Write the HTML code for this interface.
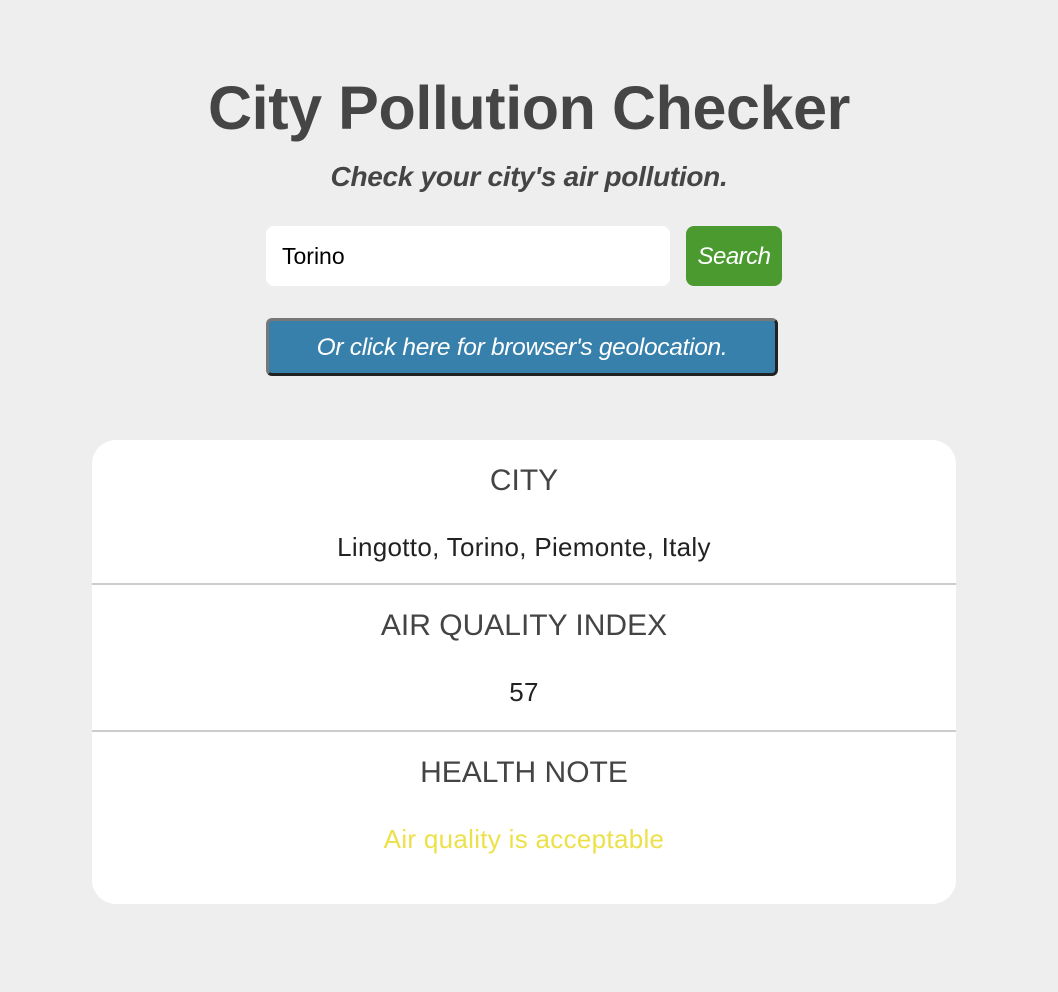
<!DOCTYPE html>
<html><head><style>
body{margin:0;background:#eee;font-family:"Liberation Sans",sans-serif;width:1058px;height:992px;position:relative;color:#444}
h1{position:absolute;top:73px;left:0;width:100%;text-align:center;margin:0;font-size:61px;font-weight:bold;color:#454545;letter-spacing:-0.4px}
.sub{position:absolute;top:161px;left:0;width:100%;text-align:center;font-size:28px;font-weight:bold;font-style:italic;color:#454545;letter-spacing:-0.3px}
.inp{position:absolute;left:266px;top:226px;width:404px;height:60px;background:#fff;border-radius:8px;box-sizing:border-box;padding-left:16px;line-height:60px;font-size:23px;color:#000}
.btn{position:absolute;left:686px;top:226px;width:96px;height:60px;background:#4a9a2f;border-radius:8px;color:#fff;font-style:italic;font-size:24px;line-height:62px;text-align:center;letter-spacing:-0.5px}
.geo{position:absolute;left:266px;top:318px;width:512px;height:58px;box-sizing:border-box;border:3px solid;border-color:#777 #222 #222 #777;border-radius:6px;background:#3880ac;color:#fff;font-style:italic;font-size:24.5px;line-height:54px;text-align:center;letter-spacing:-0.3px}
.card{position:absolute;left:92px;top:440px;width:864px;height:464px;background:#fff;border-radius:24px}
.sec{height:143px;border-bottom:2px solid #ccc;text-align:center;position:relative}
.sec.b{height:145px}
.sec:last-child{border:none}
.lab{position:absolute;top:24px;width:100%;font-size:30px;color:#444;letter-spacing:0px;font-weight:300}
.val{position:absolute;top:92px;width:100%;font-size:26px;color:#222;letter-spacing:0.3px}
</style></head><body>
<h1>City Pollution Checker</h1>
<div class="sub">Check your city's air pollution.</div>
<div class="inp">Torino</div>
<div class="btn">Search</div>
<div class="geo">Or click here for browser's geolocation.</div>
<div class="card">
<div class="sec"><div class="lab">CITY</div><div class="val">Lingotto, Torino, Piemonte, Italy</div></div>
<div class="sec b"><div class="lab">AIR QUALITY INDEX</div><div class="val">57</div></div>
<div class="sec"><div class="lab">HEALTH NOTE</div><div class="val" style="color:#ece14a">Air quality is acceptable</div></div>
</div>
</body></html>
